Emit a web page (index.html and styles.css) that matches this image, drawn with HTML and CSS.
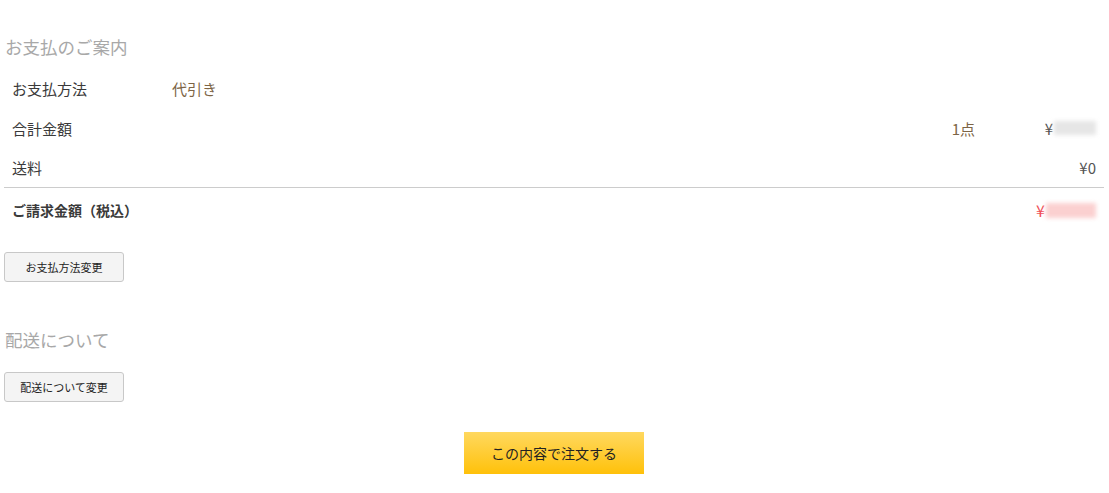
FILE: index.html
```html
<!DOCTYPE html>
<html lang="ja">

<head>
  <meta charset="UTF-8" />
  <meta name="viewport" content="width=device-width, initial-scale=1.0" />
  <title>ご注文内容の確認</title>
  <link rel="stylesheet" href="styles.css">
</head>

<body>
  <div class="container">
    <h2 class="titulo">お支払のご案内</h2>

    <div class="tabla">
      <div class="fila">
        <span class="label">お支払方法</span>
        <span class="valor">代引き</span>
      </div>
      <div class="fila">
        <span class="label">合計金額</span>
        <span class="valor"></span>
        <span class="cantidad">1点</span>
        <span class="precio">¥<span class="oculto"></span></span>
      </div>
      <div class="fila linea">
        <span class="label">送料</span>
        <span class="valor"></span>
        <span class="precio">¥0</span>
      </div>
      <div class="fila total">
        <span class="label">ご請求金額（税込）</span>
        <span class="valor"></span>
        <span class="precio rojo">¥<span class="oculto rosa"></span></span>
      </div>
    </div>

    <button class="cambiar">お支払方法変更</button>

    <h2 class="titulo envio">配送について</h2>

    <button class="cambiar">配送について変更</button>

    <div class="centro">
      <button class="pedir">この内容で注文する</button>
    </div>
  </div>
</body>

</html>
```

FILE: styles.css
```css
* {
  margin: 0px;
  padding: 0px;
  box-sizing: border-box;
}

body {
  font-family: "Noto Sans CJK JP", "Noto Sans", sans-serif;
  color: #3a3a3a;
  background: #fff;
}

.container {
  padding: 35px 5px 0 4px;
}

.titulo {
  font-size: 17.5px;
  font-weight: normal;
  line-height: 24px;
  color: #a8a8a8;
  margin-left: 1px;
}

.tabla {
  margin-top: 9px;
}

.fila {
  display: flex;
  align-items: center;
  height: 40px;
  padding: 0 8px;
  font-size: 15px;
}

.linea {
  border-bottom: 1px solid #ccc;
}

.label {
  width: 160px;
}

.valor {
  flex: 1;
  color: #7d6546;
}

.cantidad {
  color: #7d6546;
}

.precio {
  width: 121px;
  text-align: right;
  color: #555;
  display: flex;
  justify-content: flex-end;
  align-items: center;
}

.oculto {
  display: inline-block;
  width: 42px;
  height: 14px;
  margin-left: 1px;
  background: #e6e6e6;
  filter: blur(2px);
}

.total {
  height: 44px;
  font-size: 14px;
  font-weight: bold;
}

.rojo {
  color: #f0505a;
  font-size: 16px;
  font-weight: normal;
}

.rosa {
  width: 50px;
  height: 15px;
  background: #fbd0d0;
}

.cambiar {
  display: block;
  width: 120px;
  height: 30px;
  margin-top: 20px;
  font-family: inherit;
  font-size: 11px;
  color: #222;
  background: #f4f4f4;
  border: 1px solid #c8c8c8;
  border-radius: 3px;
  cursor: pointer;
}

.envio {
  margin-top: 46px;
}

.centro {
  display: flex;
  justify-content: center;
  margin-top: 30px;
}

.pedir {
  width: 180px;
  height: 42px;
  font-family: inherit;
  font-size: 14px;
  color: #222;
  border: none;
  background: linear-gradient(#ffd85f, #ffc10a);
  cursor: pointer;
}
```
